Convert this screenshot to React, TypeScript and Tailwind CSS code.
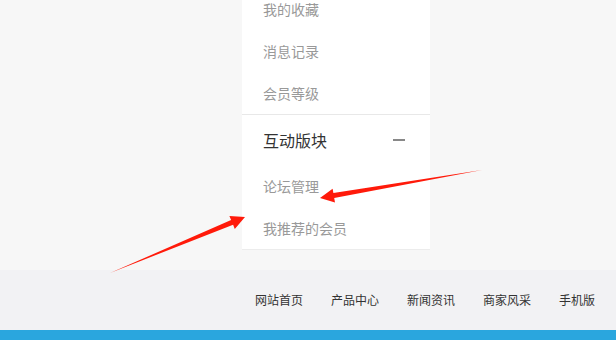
export default function App() {
  const topItems = ["我的收藏", "消息记录", "会员等级"];
  const subItems = ["论坛管理", "我推荐的会员"];
  const links = ["网站首页", "产品中心", "新闻资讯", "商家风采", "手机版"];

  return (
    <div
      className="relative w-[616px] h-[340px] overflow-hidden bg-[#f7f7f7]"
      style={{ fontFamily: '"Noto Sans CJK SC", "Noto Sans", sans-serif' }}
    >
      {/* Top area with side menu */}
      <div className="h-[270px] flex flex-col">
        <div className="ml-[242px] w-[188px] -mt-[12px] bg-white border-b border-[#ececec]">
          {topItems.map((t) => (
            <div key={t} className="h-[42px] flex items-center pl-[21px] text-[14px] text-[#999]">
              {t}
            </div>
          ))}
          <div className="h-[51px] border-t border-[#e8e8e8] flex items-center justify-between pl-[21px] pr-[25px]">
            <span className="text-[16px] text-[#333]">互动版块</span>
            <span className="w-[12px] h-[2px] bg-[#888]" />
          </div>
          {subItems.map((t) => (
            <div key={t} className="h-[42px] flex items-center pl-[21px] text-[14px] text-[#999]">
              {t}
            </div>
          ))}
        </div>
      </div>

      {/* Footer */}
      <div className="h-[60px] bg-[#f2f2f4] flex items-center justify-end pr-[21px] gap-[28px]">
        {links.map((l) => (
          <a key={l} className="text-[12px] text-[#333]">
            {l}
          </a>
        ))}
      </div>
      <div className="h-[10px] bg-[#2aa6de]" />

      {/* Annotation arrows */}
      <svg className="absolute inset-0 pointer-events-none" width="616" height="340">
        <polygon
          fill="#ff1a0a"
          points="482,170 333.4,193.1 332.6,188.7 320,198 335,202.5 334.2,198.1"
        />
        <polygon
          fill="#ff1a0a"
          points="110,273 231.1,220.1 229.4,215.9 245,217 234.8,228.9 233.1,224.7"
        />
      </svg>
    </div>
  );
}
